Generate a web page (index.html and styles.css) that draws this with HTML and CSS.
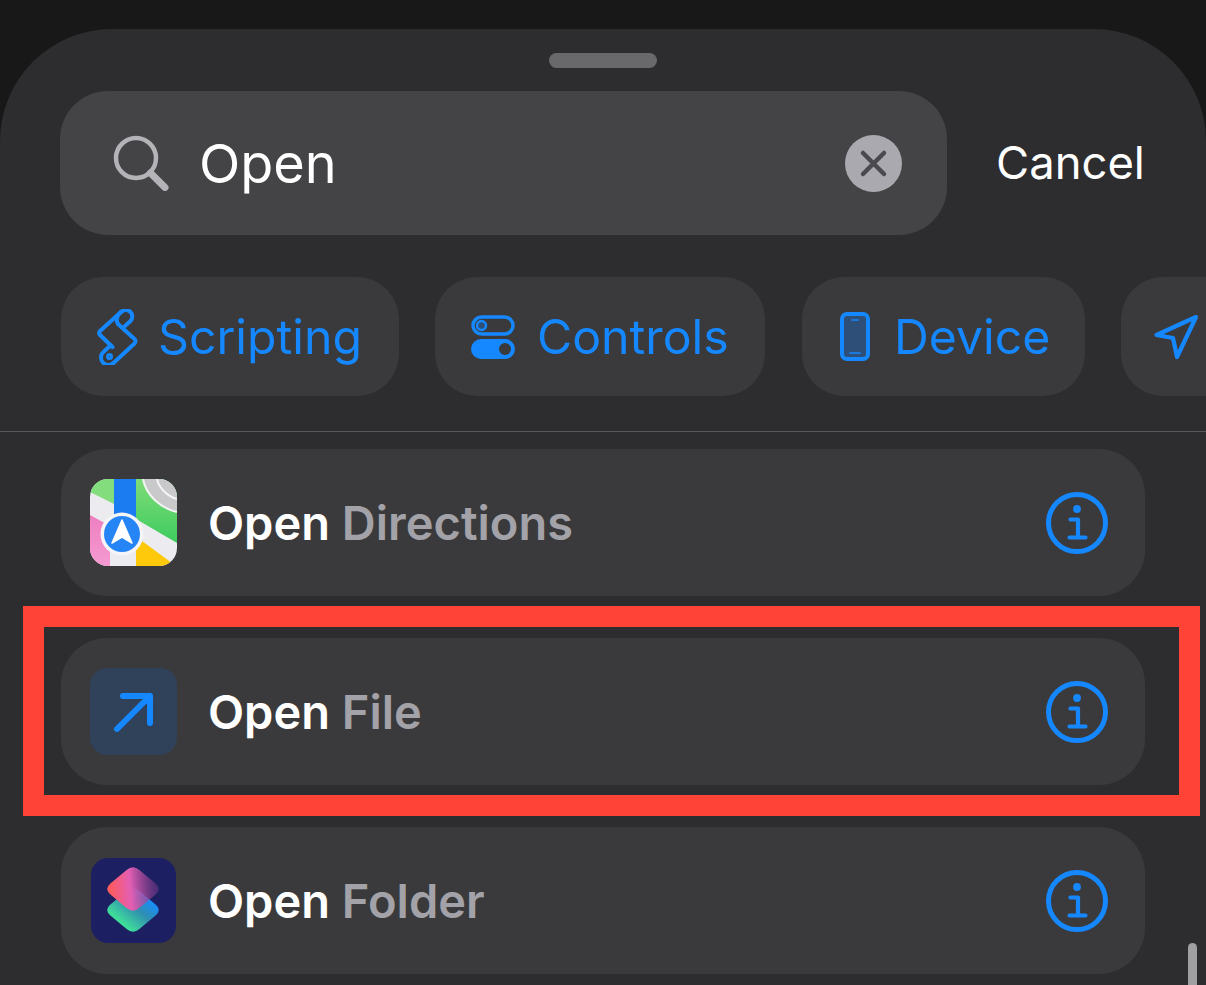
FILE: index.html
```html
<!DOCTYPE html>
<html lang="en">
<head>
<meta charset="utf-8">
<title>Search actions</title>
<link rel="stylesheet" href="styles.css">
</head>
<body>
<main class="sheet">
  <div class="handle"></div>
  <div class="search-row">
    <div class="search">
      <svg class="glass" width="56" height="56" viewBox="0 0 56 56" fill="none" stroke="#b4b4b8"><circle cx="23" cy="23" r="20" stroke-width="4.5"/><path d="M37.5 38 52 52.500" stroke-width="7" stroke-linecap="round"/></svg>
      <span class="query">Open</span>
      <svg class="clear" width="57" height="57" viewBox="0 0 57 57"><circle cx="28.500" cy="28.500" r="28.500" fill="#a9a9af"/><path d="M18 18 39 39M39 18 18 39" stroke="#4a4a4e" stroke-width="4.500" stroke-linecap="round"/></svg>
    </div>
    <span class="cancel">Cancel</span>
  </div>
  <div class="chips">
    <div class="chip chip-a">
      <svg width="42" height="56" viewBox="0 0 42 56" fill="none" stroke="#1587ff" stroke-width="4" stroke-linejoin="round" stroke-linecap="round"><path d="M24 3 3 22a3 3 0 0 0 0 4L15.500 38"/><path d="M24 3a6.500 6.500 0 0 1 9.500 9L28 17"/><path d="M21 15 37.500 30a3 3 0 0 1 0 4.500L17.500 53a7.500 7.500 0 1 1-10.500-10.500L13.500 36.500"/><path d="M21 15c-2-3-2-8 3-12"/><circle cx="12.500" cy="47.500" r="2" stroke-width="3"/></svg>
      <span>Scripting</span>
    </div>
    <div class="chip chip-b">
      <svg width="44" height="44" viewBox="0 0 44 44"><rect x="2" y="2" width="40" height="17" rx="8.500" fill="none" stroke="#1587ff" stroke-width="3.500"/><circle cx="10.500" cy="10.500" r="4.500" fill="#2e5078" stroke="#1587ff" stroke-width="2.500"/><rect x="0" y="24" width="44" height="20" rx="10" fill="#1587ff"/><circle cx="34" cy="34" r="6" fill="#3a3a3c"/></svg>
      <span>Controls</span>
    </div>
    <div class="chip chip-c">
      <svg width="30" height="49" viewBox="0 0 30 49"><rect x="2" y="2" width="26" height="45" rx="5" fill="#2e5078" stroke="#1587ff" stroke-width="4"/><path d="M12 8h6M10 41h10" stroke="#1587ff" stroke-width="1.800" stroke-linecap="round" opacity=".75"/></svg>
      <span>Device</span>
    </div>
    <div class="chip chip-d">
      <svg width="46" height="46" viewBox="0 0 46 46" fill="none"><path d="M43 3 3.500 21 20 24 24 43Z" stroke="#1587ff" stroke-width="4.200" stroke-linejoin="round"/></svg>
    </div>
  </div>
  <div class="divider"></div>
  <ul class="rows">
    <li class="row">
      <svg class="app" width="87" height="87" viewBox="0 0 87 87">
        <defs>
          <clipPath id="squircle"><rect width="87" height="87" rx="18"/></clipPath>
          <linearGradient id="greenfill" x1="0" y1="0" x2="0" y2="1"><stop offset="0" stop-color="#7fdc78"/><stop offset="1" stop-color="#3ecb5f"/></linearGradient>
          <linearGradient id="pinkfill" x1="0" y1="0" x2="0" y2="1"><stop offset="0" stop-color="#ee7fc0"/><stop offset="1" stop-color="#f49ad2"/></linearGradient>
        </defs>
        <g clip-path="url(#squircle)">
          <rect width="87" height="87" fill="#ecebef"/>
          <path d="M0 0H24V25L0 13Z" fill="#84dd7c"/>
          <path d="M46 0H87V64L46 40Z" fill="url(#greenfill)"/>
          <path d="M53 0H87V33C70 29 56 16 53 0Z" fill="#c9c9cc"/>
          <path d="M53 0C56 16 70 29 87 33" fill="none" stroke="#f4f4f4" stroke-width="2"/>
          <path d="M67 0C69 9 77 17 87 20" fill="none" stroke="#f4f4f4" stroke-width="2"/>
          <path d="M0 36 20 47V87H0Z" fill="url(#pinkfill)"/>
          <path d="M46 66 52 62 86 87H46Z" fill="#fdc90a"/>
          <path d="M24 0H46V40H24Z" fill="#1b7cf2"/>
          <circle cx="32" cy="55" r="21.500" fill="#f5f5f7"/>
          <circle cx="32" cy="55" r="18" fill="#2585f5"/>
          <path d="M32 41 42 64 32 58 22 64Z" fill="#fff" stroke="#fff" stroke-width="1.500" stroke-linejoin="round"/>
        </g>
      </svg>
      <span class="label"><b>Open</b> Directions</span>
      <svg class="info" width="62" height="62" viewBox="0 0 62 62"><use href="#info-glyph"/></svg>
    </li>
    <li class="row">
      <svg class="app" width="87" height="87" viewBox="0 0 87 87"><rect width="87" height="87" rx="17" fill="#30425a"/><path d="M27 61 60 28M33 28H60V55" fill="none" stroke="#1587ff" stroke-width="6" stroke-linecap="round" stroke-linejoin="round"/></svg>
      <span class="label"><b>Open</b> File</span>
      <svg class="info" width="62" height="62" viewBox="0 0 62 62"><use href="#info-glyph"/></svg>
    </li>
    <li class="row">
      <svg class="app" width="87" height="87" viewBox="0 0 87 87">
        <defs>
          <linearGradient id="layerlow" x1="0" y1="1" x2="1" y2="0"><stop offset=".25" stop-color="#3fdc9a"/><stop offset=".55" stop-color="#2f8fb0"/><stop offset=".8" stop-color="#178cff"/></linearGradient>
          <linearGradient id="layerhigh" x1=".05" y1=".6" x2=".95" y2=".55"><stop offset="0" stop-color="#ff5a5c"/><stop offset=".45" stop-color="#e35fb4"/><stop offset="1" stop-color="#7a3a88" stop-opacity=".55"/></linearGradient>
        </defs>
        <rect x="1" y="1" width="85" height="85" rx="17" fill="#1c2062"/>
        <path d="M36.600 33.900Q43 28.500 49.400 33.900L65.600 47.600Q72 53 65.600 58.400L49.400 72.100Q43 77.500 36.600 72.100L20.400 58.400Q14 53 20.400 47.600Z" fill="url(#layerlow)"/>
        <path d="M36.600 12.900Q43 7.500 49.400 12.900L65.600 26.600Q72 32 65.600 37.400L49.400 51.100Q43 56.500 36.600 51.100L20.400 37.400Q14 32 20.400 26.600Z" fill="url(#layerhigh)"/>
      </svg>
      <span class="label"><b>Open</b> Folder</span>
      <svg class="info" width="62" height="62" viewBox="0 0 62 62"><use href="#info-glyph"/></svg>
    </li>
  </ul>
</main>
<div class="highlight"></div>
<div class="scrollbar"></div>
<svg class="sprite" width="0" height="0"><defs><g id="info-glyph"><circle cx="31" cy="31" r="28.500" fill="none" stroke="#1587ff" stroke-width="5"/><circle cx="31" cy="17" r="3.900" fill="#1587ff"/><path d="M24.500 27.500H32V45M23.500 45.500H39.500" fill="none" stroke="#1587ff" stroke-width="4.200" stroke-linecap="round" stroke-linejoin="round"/></g></defs></svg>
</body>
</html>
```
FILE: styles.css
```css
* { box-sizing: border-box; }
html, body { margin: 0; height: 100%; }
body {
  position: relative;
  height: 985px;
  overflow: hidden;
  padding-top: 29px;
  background: #181818;
  font-family: Inter, "Liberation Sans", sans-serif;
  color: #fff;
}
.sheet {
  height: 956px;
  padding-top: 24px;
  border-radius: 112px 112px 0 0;
  background: #2d2d2f;
  overflow: hidden;
}
.handle {
  width: 108px;
  height: 15px;
  margin: 0 auto;
  border-radius: 8px;
  background: #69696c;
}
.search-row {
  display: flex;
  align-items: center;
  margin-top: 23px;
  padding-left: 60px;
}
.search {
  display: flex;
  align-items: center;
  width: 887px;
  height: 144px;
  padding: 0 45px 0 53px;
  border-radius: 48px;
  background: #444447;
}
.glass { flex: none; }
.query {
  flex: 1;
  margin: 2px 0 0 30px;
  font-size: 54px;
  line-height: 1;
}
.clear { flex: none; }
.cancel {
  margin-left: 49px;
  font-size: 45.4px;
  line-height: 1;
}
.chips {
  display: flex;
  gap: 36px;
  margin-top: 42px;
  padding-left: 61px;
  width: 1400px;
}
.chip {
  flex: none;
  display: flex;
  align-items: center;
  height: 119px;
  border-radius: 42px;
  background: #3a3a3c;
  color: #1587ff;
  font-size: 48.2px;
  line-height: 1;
}
.chip span { margin-top: 2px; }
.chip svg { flex: none; }
.chip-a { width: 338px; padding-left: 36px; gap: 19px; }
.chip-b { width: 330px; padding-left: 36px; gap: 22px; }
.chip-c { width: 283px; padding-left: 38px; gap: 24px; margin-left: 1px; }
.chip-d { width: 200px; padding-left: 32px; }
.divider {
  height: 1px;
  margin-top: 35px;
  background: #58585a;
}
.rows {
  display: flex;
  flex-direction: column;
  gap: 42px;
  margin: 17px 61px 0;
  padding: 0;
  list-style: none;
}
.row {
  display: flex;
  align-items: center;
  height: 147px;
  padding: 0 37px 0 29px;
  border-radius: 46px;
  background: #3a3a3c;
}
.app { flex: none; }
.label {
  flex: 1;
  margin-left: 31px;
  font-size: 47px;
  font-weight: 600;
  line-height: 1;
  color: #a2a2a8;
}
.label b { font-weight: 600; color: #fff; }
.info { flex: none; }
.highlight {
  position: absolute;
  left: 23px;
  top: 606px;
  width: 1177px;
  height: 210px;
  border: 21px solid #ff4336;
}
.scrollbar {
  position: absolute;
  left: 1188px;
  top: 943px;
  width: 9px;
  height: 42px;
  border-radius: 5px 5px 0 0;
  background: #a0a0a2;
}
.sprite { position: absolute; }
```
